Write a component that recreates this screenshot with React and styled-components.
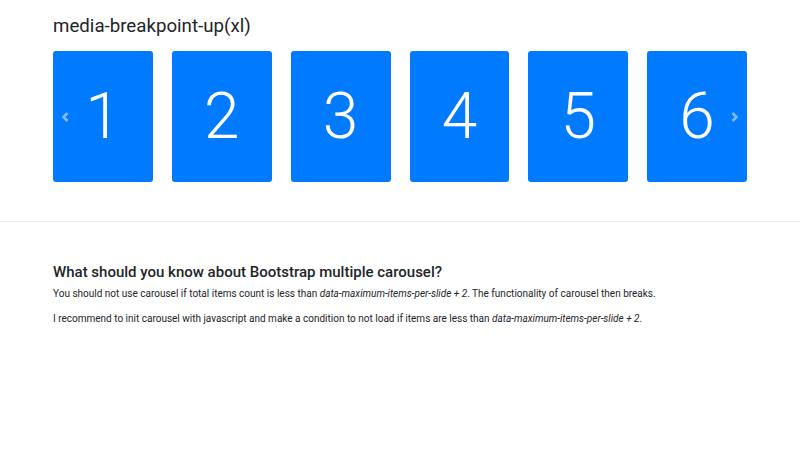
import React from "react";
import styled, { createGlobalStyle } from "styled-components";

const Global = createGlobalStyle`
  html, body { margin: 0; padding: 0; background: #fff; }
  body { font-family: Roboto, "Liberation Sans", sans-serif; color: #212529; }
`;

const Top = styled.section`
  padding: 14px 53px 39px;
  border-bottom: 1px solid #e9ecef;
`;

const Title = styled.h2`
  margin: 0 0 13px;
  font-size: 18.7px;
  font-weight: 400;
  line-height: 24px;
`;

const Carousel = styled.div`
  position: relative;
  display: grid;
  grid-template-columns: repeat(6, 1fr);
  column-gap: 19px;
`;

const Slide = styled.div`
  height: 131px;
  background: #007bff;
  border-radius: 3px;
  color: #fff;
  display: flex;
  align-items: center;
  justify-content: center;
  font-size: 64px;
  font-weight: 300;
`;

const Arrow = styled.div`
  position: absolute;
  top: 50%;
  ${(p) => (p.$side === "left" ? "left: 7px;" : "right: 8px;")}
  transform: translateY(-50%);
  width: 10px;
  height: 14px;
  display: flex;
  align-items: center;
  justify-content: center;
`;

const Content = styled.section`
  padding: 40px 53px;
`;

const H3 = styled.h3`
  margin: 0 0 4px;
  font-size: 15px;
  font-weight: 500;
  line-height: 20px;
`;

const P = styled.p`
  margin: 0 0 10px;
  font-size: 10px;
  line-height: 15px;
`;

const Chevron = ({ dir }) => (
  <svg width="9" height="12" viewBox="0 0 9 12">
    <path
      d={dir === "left" ? "M6.5 2 L2.5 6 L6.5 10" : "M2.5 2 L6.5 6 L2.5 10"}
      fill="none"
      stroke="rgba(255,255,255,0.5)"
      strokeWidth="2.6"
    />
  </svg>
);

export default function App() {
  return (
    <>
      <Global />
      <Top>
        <Title>media-breakpoint-up(xl)</Title>
        <Carousel>
          {[1, 2, 3, 4, 5, 6].map((n) => (
            <Slide key={n}>{n}</Slide>
          ))}
          <Arrow $side="left"><Chevron dir="left" /></Arrow>
          <Arrow $side="right"><Chevron dir="right" /></Arrow>
        </Carousel>
      </Top>
      <Content>
        <H3>What should you know about Bootstrap multiple carousel?</H3>
        <P>
          You should not use carousel if total items count is less than{" "}
          <em>data-maximum-items-per-slide + 2</em>. The functionality of carousel then breaks.
        </P>
        <P>
          I recommend to init carousel with javascript and make a condition to not load if items are less than{" "}
          <em>data-maximum-items-per-slide + 2</em>.
        </P>
      </Content>
    </>
  );
}
